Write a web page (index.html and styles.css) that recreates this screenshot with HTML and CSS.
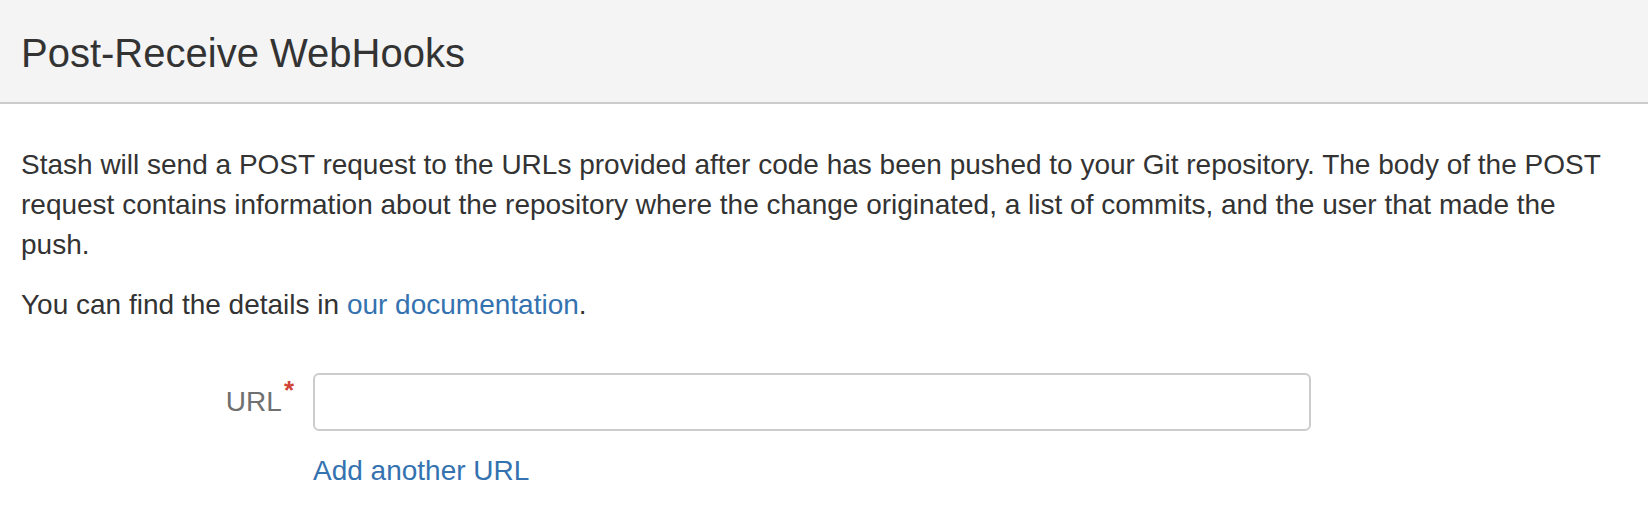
FILE: index.html
```html
<!DOCTYPE html>
<html>
<head>
<meta charset="utf-8">
<link rel="stylesheet" href="styles.css">
</head>
<body>
<header class="page-header">
  <h1 class="title">Post-Receive WebHooks</h1>
</header>
<main class="content">
  <p class="para">Stash will send a POST request to the URLs provided after code has been pushed to your Git repository. The body of the POST request contains information about the repository where the change originated, a list of commits, and the user that made the push.</p>
  <p class="para">You can find the details in <a class="link" href="#">our documentation</a>.</p>
  <form class="form">
    <div class="field">
      <label class="label" for="url">URL<span class="req">*</span></label>
      <input class="input" id="url" type="text">
    </div>
    <div class="field">
      <span class="label-spacer"></span>
      <a class="link add" href="#">Add another URL</a>
    </div>
  </form>
</main>
</body>
</html>
```

FILE: styles.css
```css
html, body {
  margin: 0;
  padding: 0;
  background: #ffffff;
}
body {
  font-family: "Liberation Sans", Arial, sans-serif;
  color: #333333;
}
.page-header {
  height: 98px;
  background: #f4f4f4;
  border-bottom: 2px solid #cccccc;
  display: flex;
  align-items: center;
  padding: 4px 21px 0 21px;
  box-sizing: content-box;
}
.title {
  margin: 0;
  font-size: 40px;
  font-weight: normal;
  line-height: 48px;
  color: #333333;
}
.content {
  padding: 41px 21px 0 21px;
}
.para {
  margin: 0 0 20px 0;
  font-size: 28px;
  line-height: 40px;
}
.link {
  color: #3572b0;
  text-decoration: none;
}
.form {
  margin-top: 48px;
}
.field {
  display: flex;
  align-items: center;
  gap: 19px;
}
.field + .field {
  margin-top: 20px;
}
.label, .label-spacer {
  width: 273px;
  flex: none;
  text-align: right;
  font-size: 28px;
  line-height: 40px;
  color: #707070;
}
.req {
  color: #d04437;
  font-size: 26px;
  font-weight: bold;
  position: relative;
  top: -12px;
  margin-left: 2px;
}
.input {
  width: 998px;
  height: 58px;
  box-sizing: border-box;
  border: 2px solid #cccccc;
  border-radius: 6px;
  background: #ffffff;
  font-size: 28px;
  padding: 0 10px;
  margin: 0;
}
.add {
  font-size: 28px;
  line-height: 40px;
}
```
